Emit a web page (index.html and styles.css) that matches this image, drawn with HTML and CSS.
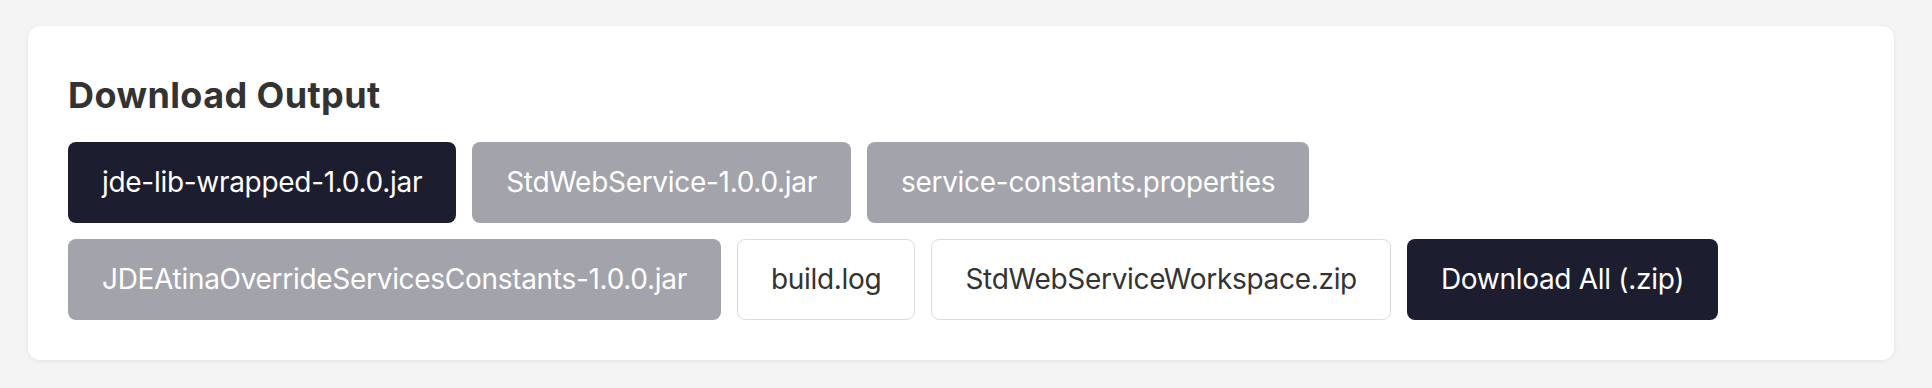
FILE: index.html
```html
<!DOCTYPE html>
<html lang="en">
<head>
<meta charset="utf-8">
<title>Download Output</title>
<link rel="stylesheet" href="styles.css">
</head>
<body>
<div class="page">
  <section class="card">
    <h2 class="card-title">Download Output</h2>
    <div class="downloads">
      <button class="dl dl-dark">jde-lib-wrapped-1.0.0.jar</button>
      <button class="dl dl-grey">StdWebService-1.0.0.jar</button>
      <button class="dl dl-grey">service-constants.properties</button>
      <button class="dl dl-grey">JDEAtinaOverrideServicesConstants-1.0.0.jar</button>
      <button class="dl dl-light">build.log</button>
      <button class="dl dl-light">StdWebServiceWorkspace.zip</button>
      <button class="dl dl-dark">Download All (.zip)</button>
    </div>
  </section>
</div>
</body>
</html>
```
FILE: styles.css
```css
html, body {
  margin: 0;
  padding: 0;
  background: #f4f4f4;
  font-family: Inter, "Noto Sans", "Liberation Sans", sans-serif;
}

.page {
  padding: 26px 38px 28px 28px;
}

.card {
  background: #ffffff;
  border-radius: 12px;
  box-shadow: 0 1px 4px rgba(0, 0, 0, 0.08);
  padding: 48px 40px 40px 40px;
}

.card-title {
  margin: 0 0 25px 0;
  font-size: 36px;
  line-height: 43px;
  font-weight: 700;
  letter-spacing: 0.4px;
  color: #333333;
}

.downloads {
  display: flex;
  flex-wrap: wrap;
  gap: 16px;
}

.dl {
  font-family: inherit;
  font-size: 28px;
  line-height: 43px;
  letter-spacing: -0.3px;
  padding: 18px 33px;
  border-radius: 8px;
  border: 1px solid transparent;
  cursor: pointer;
}

.dl-dark {
  background: #1c1d2e;
  color: #ffffff;
}

.dl-grey {
  background: #a3a3ab;
  color: #ffffff;
}

.dl-light {
  background: #ffffff;
  color: #333333;
  border-color: #dcdcdc;
}
```
